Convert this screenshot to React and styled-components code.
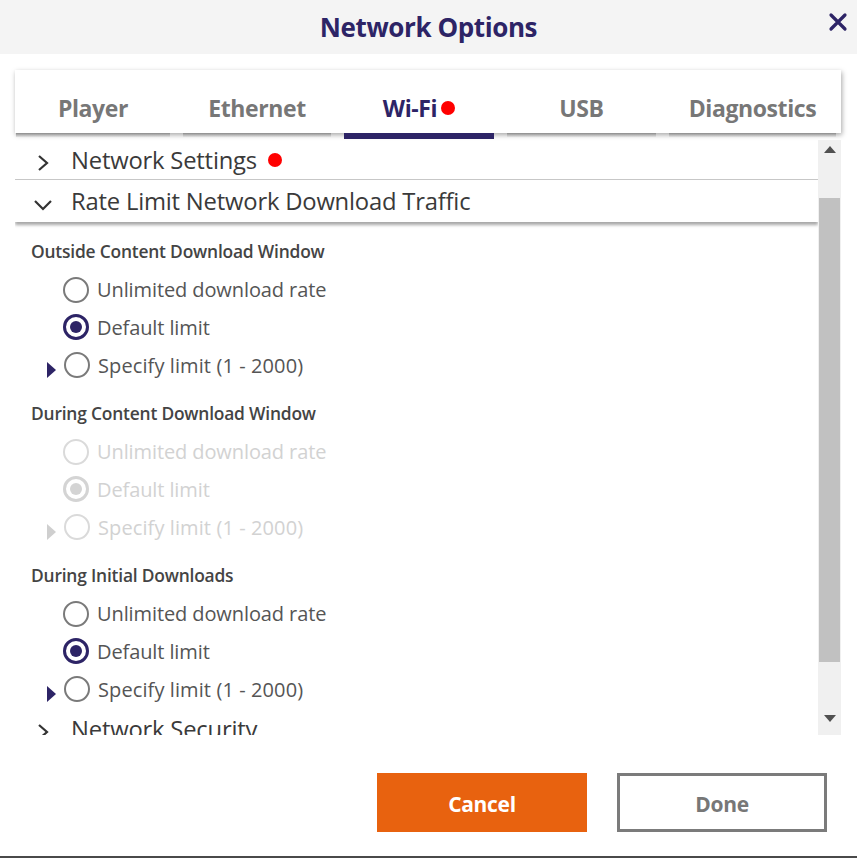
import styled, { createGlobalStyle } from "styled-components";

const NAVY = "#2d2466";

const GlobalStyle = createGlobalStyle`
  html, body {
    margin: 0;
    padding: 0;
    background: #fff;
  }
  body {
    font-family: "Open Sans", "Noto Sans", sans-serif;
  }
`;

// dialog shell
const Dialog = styled.div`
  width: 857px;
  height: 858px;
  box-sizing: border-box;
  display: flex;
  flex-direction: column;
  border-bottom: 2px solid #4a4a4a;
  background: #fff;
`;
const Header = styled.div`
  height: 54px;
  flex-shrink: 0;
  display: grid;
  grid-template-columns: 1fr auto 1fr;
  align-items: center;
  background: #f4f4f4;
`;
const Title = styled.h1`
  grid-column: 2;
  margin: 0;
  font-size: 26px;
  font-weight: 700;
  letter-spacing: -0.4px;
  color: ${NAVY};
`;
const CloseBtn = styled.button`
  justify-self: end;
  align-self: start;
  margin: 12px 9px 0 0;
  width: 20px;
  height: 20px;
  padding: 0;
  border: none;
  background: none;
  cursor: pointer;
  display: flex;
`;

// tabs
const TabCard = styled.div`
  margin: 16px 16px 0 15px;
  height: 63px;
  flex-shrink: 0;
  display: grid;
  grid-template-columns: 154px 148px 150px 149px 1fr;
  column-gap: 13px;
  padding: 0 5px 0 1px;
  background: #fff;
  box-shadow: 1px 2px 5px rgba(0, 0, 0, 0.35);
`;
const Tab = styled.div`
  position: relative;
  display: flex;
  align-items: center;
  justify-content: center;
  gap: 4px;
  padding-top: 12px;
  font-size: 23px;
  font-weight: 700;
  letter-spacing: -0.4px;
  color: ${(p) => (p.$active ? NAVY : "#777")};

  &::after {
    content: "";
    position: absolute;
    left: 0;
    right: 0;
    bottom: ${(p) => (p.$active ? "-6px" : "-4px")};
    height: ${(p) => (p.$active ? "6px" : "4px")};
    background: ${(p) =>
      p.$active ? NAVY : "linear-gradient(#8a8a8a, #e4e4e4)"};
  }
`;
const Dot = styled.span`
  display: inline-block;
  width: 14px;
  height: 14px;
  border-radius: 50%;
  background: #f00;
  flex-shrink: 0;
`;

// scrolling body
const ScrollArea = styled.div`
  margin: 7px 16px 0 15px;
  height: 595px;
  flex-shrink: 0;
  display: flex;
`;
const ScrollContent = styled.div`
  flex: 1;
  overflow: hidden;
`;
const ScrollBar = styled.div`
  width: 23px;
  flex-shrink: 0;
  display: flex;
  flex-direction: column;
  align-items: center;
  background: #f0f0f0;
`;
const ScrollArrow = styled.div`
  height: ${(p) => p.$h}px;
  box-sizing: border-box;
  display: flex;
  justify-content: center;
  align-items: ${(p) => (p.$down ? "flex-end" : "flex-start")};
  padding: ${(p) => (p.$down ? "0 0 12px" : "5px 0 0")};
`;
const ScrollThumb = styled.div`
  width: 21px;
  height: 464px;
  background: #c1c1c1;
`;

const SectionHead = styled.div`
  height: ${(p) => p.$h}px;
  display: flex;
  align-items: center;
  font-size: 23.8px;
  color: #3a3a3a;
  letter-spacing: -0.2px;
  border-bottom: ${(p) => (p.$divider ? "1px solid #c8c8c8" : "none")};
  box-shadow: ${(p) => (p.$open ? "0 3px 3px rgba(0, 0, 0, 0.35)" : "none")};
`;
const Chevron = styled.span`
  width: 56px;
  display: flex;
  justify-content: center;
  padding-top: ${(p) => (p.$down ? "8px" : "6px")};
`;
const HeadText = styled.span`
  display: flex;
  align-items: center;
  gap: 11px;
`;

const Group = styled.div`
  padding: 17px 0 0 16px;
`;
const GroupLabel = styled.div`
  height: 24px;
  line-height: 24px;
  margin-bottom: 8px;
  font-size: 17.4px;
  font-weight: 600;
  color: #444;
  letter-spacing: -0.2px;
`;
const Option = styled.label`
  height: 37.67px;
  display: flex;
  align-items: center;
  padding-left: ${(p) => (p.$marker ? "16px" : "32px")};
  font-size: 20px;
  color: ${(p) => (p.$disabled ? "#d2d2d2" : "#555")};
  letter-spacing: ${(p) => (p.$marker ? "0.1px" : "-0.1px")};
`;
const Marker = styled.span`
  width: 0;
  height: 0;
  margin: 10px 8px 0 0;
  border-top: 8px solid transparent;
  border-bottom: 8px solid transparent;
  border-left: 9px solid ${(p) => (p.$disabled ? "#cfcfcf" : NAVY)};
`;
const Radio = styled.span`
  width: 26px;
  height: 26px;
  box-sizing: border-box;
  border-radius: 50%;
  margin-right: 8px;
  flex-shrink: 0;
  display: flex;
  align-items: center;
  justify-content: center;
  border: ${(p) =>
    p.$checked
      ? `3px solid ${p.$disabled ? "#d4d4d4" : NAVY}`
      : `2px solid ${p.$disabled ? "#dadada" : "#7a7a7a"}`};

  &::after {
    content: "";
    display: ${(p) => (p.$checked ? "block" : "none")};
    width: 12px;
    height: 12px;
    border-radius: 50%;
    background: ${(p) => (p.$disabled ? "#d4d4d4" : NAVY)};
  }
`;

// footer buttons
const Footer = styled.div`
  display: flex;
  justify-content: flex-end;
  gap: 30px;
  padding: 38px 30px 0 0;
`;
const Button = styled.button`
  width: 210px;
  height: 59px;
  box-sizing: border-box;
  padding-top: 3px;
  font-family: inherit;
  font-size: 21px;
  font-weight: 700;
  letter-spacing: -0.3px;
  cursor: pointer;
  border: ${(p) => (p.$primary ? "none" : "3px solid #7b7b7b")};
  background: ${(p) => (p.$primary ? "#e8620f" : "#fff")};
  color: ${(p) => (p.$primary ? "#fff" : "#777")};
`;

const tabs = ["Player", "Ethernet", "Wi-Fi", "USB", "Diagnostics"];

const groups = [
  { label: "Outside Content Download Window", disabled: false },
  { label: "During Content Download Window", disabled: true },
  { label: "During Initial Downloads", disabled: false },
];

const ChevronRight = () => (
  <svg width="12" height="18" viewBox="0 0 12 18">
    <path d="M2 2l8 7-8 7" fill="none" stroke="#333" strokeWidth="2.2" />
  </svg>
);
const ChevronDown = () => (
  <svg width="20" height="12" viewBox="0 0 20 12">
    <path d="M2 2l8 8 8-8" fill="none" stroke="#333" strokeWidth="2.2" />
  </svg>
);

const OptionGroup = ({ label, disabled }) => (
  <Group>
    <GroupLabel>{label}</GroupLabel>
    <Option $disabled={disabled}>
      <Radio $disabled={disabled} />
      Unlimited download rate
    </Option>
    <Option $disabled={disabled}>
      <Radio $disabled={disabled} $checked />
      Default limit
    </Option>
    <Option $disabled={disabled} $marker>
      <Marker $disabled={disabled} />
      <Radio $disabled={disabled} />
      Specify limit (1 - 2000)
    </Option>
  </Group>
);

const App = () => {
  return (
    <Dialog>
      <GlobalStyle />
      <Header>
        <Title>Network Options</Title>
        <CloseBtn aria-label="Close">
          <svg width="20" height="20" viewBox="0 0 20 20">
            <path
              d="M3 3l14 14M17 3L3 17"
              stroke={NAVY}
              strokeWidth="3.2"
              strokeLinecap="round"
            />
          </svg>
        </CloseBtn>
      </Header>

      <TabCard>
        {tabs.map((t) => (
          <Tab key={t} $active={t === "Wi-Fi"}>
            {t}
            {t === "Wi-Fi" && <Dot />}
          </Tab>
        ))}
      </TabCard>

      <ScrollArea>
        <ScrollContent>
          <SectionHead $h={39} $divider>
            <Chevron>
              <ChevronRight />
            </Chevron>
            <HeadText>
              Network Settings
              <Dot />
            </HeadText>
          </SectionHead>
          <SectionHead $h={42} $open>
            <Chevron $down>
              <ChevronDown />
            </Chevron>
            <HeadText>Rate Limit Network Download Traffic</HeadText>
          </SectionHead>
          {groups.map((g) => (
            <OptionGroup key={g.label} {...g} />
          ))}
          <SectionHead $h={42}>
            <Chevron>
              <ChevronRight />
            </Chevron>
            <HeadText>Network Security</HeadText>
          </SectionHead>
        </ScrollContent>
        <ScrollBar>
          <ScrollArrow $h={58}>
            <svg width="12" height="8" viewBox="0 0 12 8">
              <path d="M0 8L6 1l6 7z" fill="#505050" />
            </svg>
          </ScrollArrow>
          <ScrollThumb />
          <ScrollArrow $h={73} $down>
            <svg width="12" height="8" viewBox="0 0 12 8">
              <path d="M0 0l6 7 6-7z" fill="#505050" />
            </svg>
          </ScrollArrow>
        </ScrollBar>
      </ScrollArea>

      <Footer>
        <Button $primary>Cancel</Button>
        <Button>Done</Button>
      </Footer>
    </Dialog>
  );
};

export default App;
